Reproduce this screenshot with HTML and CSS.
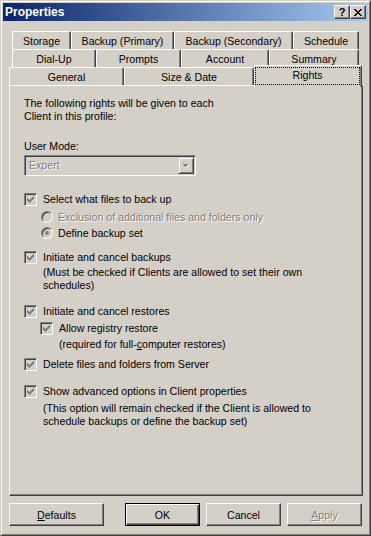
FILE: index.html
```html
<!DOCTYPE html>
<html lang="en">
<head>
  <meta charset="UTF-8">
  <title>Properties</title>
  <link rel="stylesheet" href="styles.css">
</head>
<body>
<div class="window">
  <div class="window-inner">
    <div class="titlebar">
      <span class="title">Properties</span>
      <span class="cap-btn">?</span>
      <span class="cap-btn">
        <svg width="8" height="7" viewBox="0 0 8 7"><path d="M0 0h2v1h-2zM6 0h2v1h-2zM1 1h2v1h-2zM5 1h2v1h-2zM2 2h4v1h-4zM3 3h2v1h-2zM2 4h4v1h-4zM1 5h2v1h-2zM5 5h2v1h-2zM0 6h2v1h-2zM6 6h2v1h-2z" fill="#000"/></svg>
      </span>
    </div>

    <div class="tabs">
      <div class="tab-row row-back">
        <div class="tab t-storage">Storage</div>
        <div class="tab t-primary">Backup (Primary)</div>
        <div class="tab t-secondary">Backup (Secondary)</div>
        <div class="tab t-schedule">Schedule</div>
      </div>
      <div class="tab-row row-back">
        <div class="tab t-dialup">Dial-Up</div>
        <div class="tab t-prompts">Prompts</div>
        <div class="tab t-account">Account</div>
        <div class="tab t-summary">Summary</div>
      </div>
      <div class="tab-row row-front">
        <div class="tab t-general">General</div>
        <div class="tab t-size">Size &amp; Date</div>
        <div class="tab sel t-rights"><span class="focus">Rights</span></div>
      </div>
    </div>

    <div class="panel">
      <p class="intro">The following rights will be given to each<br>Client in this profile:</p>

      <div class="label">User Mode:</div>
      <div class="combo">
        <span class="combo-text">Expert</span>
        <span class="combo-btn">
          <svg width="6" height="4" viewBox="0 0 6 4"><path d="M1 1h5v1h-5zM2 2h3v1h-3zM3 3h1v1h-1z" fill="#fff"/><path d="M0 0h5v1h-5zM1 1h3v1h-3zM2 2h1v1h-1z" fill="#808080"/></svg>
        </span>
      </div>

      <div class="check c-select">
        <span class="box"><svg width="7" height="7" viewBox="0 0 7 7"><path d="M6 0h1v1h-1zM5 1h2v1h-2zM0 2h1v1h-1zM4 2h3v1h-3zM0 3h2v1h-2zM3 3h3v1h-3zM0 4h5v1h-5zM1 5h3v1h-3zM2 6h1v1h-1z" fill="#808080"/></svg></span>
        <span>Select what files to back up</span>
      </div>
      <div class="radio r-first">
        <span class="dot"></span>
        <span class="disabled">Exclusion of additional files and folders only</span>
      </div>
      <div class="radio">
        <span class="dot on"></span>
        <span>Define backup set</span>
      </div>

      <div class="check c-backups">
        <span class="box"><svg width="7" height="7" viewBox="0 0 7 7"><path d="M6 0h1v1h-1zM5 1h2v1h-2zM0 2h1v1h-1zM4 2h3v1h-3zM0 3h2v1h-2zM3 3h3v1h-3zM0 4h5v1h-5zM1 5h3v1h-3zM2 6h1v1h-1z" fill="#808080"/></svg></span>
        <span>Initiate and cancel backups</span>
      </div>
      <p class="note n-backups">(Must be checked if Clients are allowed to set their own<br>schedules)</p>

      <div class="check c-restores">
        <span class="box"><svg width="7" height="7" viewBox="0 0 7 7"><path d="M6 0h1v1h-1zM5 1h2v1h-2zM0 2h1v1h-1zM4 2h3v1h-3zM0 3h2v1h-2zM3 3h3v1h-3zM0 4h5v1h-5zM1 5h3v1h-3zM2 6h1v1h-1z" fill="#808080"/></svg></span>
        <span>Initiate and cancel restores</span>
      </div>
      <div class="check sub c-registry">
        <span class="box"><svg width="7" height="7" viewBox="0 0 7 7"><path d="M6 0h1v1h-1zM5 1h2v1h-2zM0 2h1v1h-1zM4 2h3v1h-3zM0 3h2v1h-2zM3 3h3v1h-3zM0 4h5v1h-5zM1 5h3v1h-3zM2 6h1v1h-1z" fill="#808080"/></svg></span>
        <span>Allow registry restore</span>
      </div>
      <p class="note sub n-registry">(required for full-<u>c</u>omputer restores)</p>

      <div class="check c-delete">
        <span class="box"><svg width="7" height="7" viewBox="0 0 7 7"><path d="M6 0h1v1h-1zM5 1h2v1h-2zM0 2h1v1h-1zM4 2h3v1h-3zM0 3h2v1h-2zM3 3h3v1h-3zM0 4h5v1h-5zM1 5h3v1h-3zM2 6h1v1h-1z" fill="#808080"/></svg></span>
        <span>Delete files and folders from Server</span>
      </div>

      <div class="check c-advanced">
        <span class="box"><svg width="7" height="7" viewBox="0 0 7 7"><path d="M6 0h1v1h-1zM5 1h2v1h-2zM0 2h1v1h-1zM4 2h3v1h-3zM0 3h2v1h-2zM3 3h3v1h-3zM0 4h5v1h-5zM1 5h3v1h-3zM2 6h1v1h-1z" fill="#808080"/></svg></span>
        <span>Show advanced options in Client properties</span>
      </div>
      <p class="note n-advanced">(This option will remain checked if the Client is allowed to<br>schedule backups or define the backup set)</p>
    </div>

    <div class="buttons">
      <span class="btn b-defaults"><span><u>D</u>efaults</span></span>
      <span class="btn default b-ok">OK</span>
      <span class="btn b-cancel">Cancel</span>
      <span class="btn b-apply disabled"><span><u>A</u>pply</span></span>
    </div>
  </div>
</div>
</body>
</html>
```

FILE: styles.css
```css
* {
  box-sizing: border-box;
  margin: 0;
  padding: 0;
}

body {
  background: #d4d0c8;
  font-family: "Liberation Sans", Arial, sans-serif;
  font-size: 10.6px;
  color: #000;
}

.window {
  width: 371px;
  height: 536px;
  border: 1px solid;
  border-color: #d4d0c8 #404040 #404040 #d4d0c8;
  background: #d4d0c8;
}
.window-inner {
  height: 100%;
  border: 1px solid;
  border-color: #fff #808080 #808080 #fff;
  padding: 1px;
}

/* title bar */
.titlebar {
  height: 18px;
  display: flex;
  align-items: center;
  padding: 0 2px;
  background: linear-gradient(to right, #0a246a, #a6caf0);
}
.title {
  flex: 1;
  color: #fff;
  font-weight: bold;
  font-size: 12px;
}
.cap-btn {
  width: 16px;
  height: 14px;
  border: 1px solid;
  border-color: #fff #404040 #404040 #fff;
  box-shadow: inset -1px -1px #808080;
  background: #d4d0c8;
  display: flex;
  align-items: center;
  justify-content: center;
  font-weight: bold;
  font-size: 11px;
  line-height: 12px;
}

/* tabs */
.tabs {
  margin-top: 10px;
}
.tab-row {
  display: flex;
  height: 18px;
}
.row-back {
  margin-left: 9px;
}
.row-front {
  margin-left: 6px;
  margin-top: -2px;
  height: 20px;
  align-items: flex-end;
}
.tab {
  height: 18px;
  border-top: 1px solid #fff;
  border-left: 1px solid #fff;
  border-right: 1px solid #404040;
  border-top-left-radius: 2px;
  border-top-right-radius: 2px;
  box-shadow: inset -1px 0 #808080;
  background: #d4d0c8;
  text-align: center;
  padding-top: 1px;
  line-height: 16px;
  white-space: nowrap;
}
.tab.sel {
  height: 22px;
  margin-bottom: -2px;
  position: relative;
  z-index: 1;
  padding: 1px 1px 0 0;
}
.focus {
  display: block;
  height: 18px;
  border: 1px dotted #000;
  line-height: 15px;
}
.t-storage { width: 59px; }
.t-primary { width: 103px; }
.t-secondary { width: 119px; }
.t-schedule { width: 66px; }
.t-dialup { width: 84px; }
.t-prompts { width: 85px; }
.t-account { width: 88px; }
.t-summary { width: 90px; }
.t-general { width: 115px; }
.t-size { width: 130px; }
.t-rights { width: 108px; }

/* page */
.panel {
  margin-left: 6px;
  width: 354px;
  height: 411px;
  border: 1px solid;
  border-color: #fff #404040 #404040 #fff;
  box-shadow: inset -1px -1px #808080;
  padding: 11px 0 0 14px;
  line-height: 13px;
}
.label {
  margin-top: 17px;
}
.combo {
  margin-top: 2px;
  width: 172px;
  height: 21px;
  display: flex;
  align-items: center;
  border: 1px solid;
  border-color: #808080 #fff #fff #808080;
  box-shadow: inset 1px 1px #404040, inset -1px -1px #d4d0c8;
  padding: 1px;
}
.combo-text {
  flex: 1;
  padding-left: 3px;
  color: #808080;
  text-shadow: 1px 1px #fff;
}
.combo-btn {
  width: 16px;
  height: 17px;
  border: 1px solid;
  border-color: #d4d0c8 #404040 #404040 #d4d0c8;
  box-shadow: inset 1px 1px #fff, inset -1px -1px #808080;
  display: flex;
  align-items: center;
  justify-content: center;
}

.check {
  display: flex;
  align-items: center;
  gap: 6px;
  height: 13px;
}
.check.sub {
  margin-left: 16px;
}
.box {
  width: 13px;
  height: 13px;
  flex: none;
  border: 1px solid;
  border-color: #808080 #fff #fff #808080;
  box-shadow: inset 1px 1px #404040, inset -1px -1px #d4d0c8;
  display: flex;
  align-items: center;
  justify-content: center;
}
.radio {
  display: flex;
  align-items: center;
  gap: 5px;
  height: 16px;
  margin-left: 17px;
}
.dot {
  width: 12px;
  height: 12px;
  flex: none;
  border-radius: 50%;
  border: 1px solid;
  border-color: #808080 #fff #fff #808080;
  box-shadow: inset 1px 1px #404040, inset -1px -1px #d4d0c8;
  display: flex;
  align-items: center;
  justify-content: center;
}
.dot.on::after {
  content: "";
  width: 4px;
  height: 4px;
  border-radius: 50%;
  background: #808080;
}
.disabled {
  color: #808080;
  text-shadow: 1px 1px #fff;
}
.note {
  padding-left: 19px;
}
.note.sub {
  padding-left: 35px;
}

.c-select { margin-top: 17px; }
.r-first { margin-top: 3px; }
.c-backups { margin-top: 10px; }
.n-backups { margin-top: 2px; }
.c-restores { margin-top: 13px; }
.c-registry { margin-top: 4px; }
.n-registry { margin-top: 3px; }
.c-delete { margin-top: 7px; }
.c-advanced { margin-top: 14px; }
.n-advanced { margin-top: 4px; }

/* buttons */
.buttons {
  display: flex;
  margin: 7px 0 0 6px;
}
.btn {
  width: 75px;
  height: 23px;
  border: 1px solid;
  border-color: #fff #404040 #404040 #fff;
  box-shadow: inset -1px -1px #808080;
  display: flex;
  align-items: center;
  justify-content: center;
}
.btn.default {
  border-color: #000;
  box-shadow: inset 1px 1px #fff, inset -1px -1px #404040, inset -2px -2px #808080;
}
.b-defaults { width: 95px; }
.b-ok { margin-left: 21px; }
.b-cancel { margin-left: 6px; }
.b-apply { margin-left: 6px; }
```
